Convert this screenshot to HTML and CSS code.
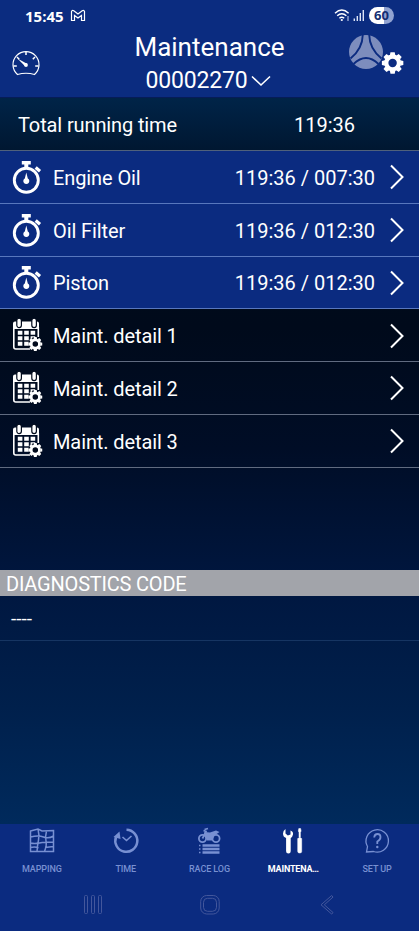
FILE: index.html
```html
<!DOCTYPE html>
<html lang="en">
<head>
<meta charset="utf-8">
<title>Maintenance</title>
<link rel="stylesheet" href="styles.css">
</head>
<body>
<svg class="defs" width="0" height="0">
  <defs>
    <symbol id="gear" viewBox="-12 -12 24 24">
      <circle r="6.6" fill="none" stroke="currentColor" stroke-width="4.4"/>
      <g fill="currentColor">
        <path id="tooth" d="M-2.8-8L-2.2-11.200H2.200L2.800-8Z"/>
        <use href="#tooth" transform="rotate(45)"/><use href="#tooth" transform="rotate(90)"/>
        <use href="#tooth" transform="rotate(135)"/><use href="#tooth" transform="rotate(180)"/>
        <use href="#tooth" transform="rotate(225)"/><use href="#tooth" transform="rotate(270)"/>
        <use href="#tooth" transform="rotate(315)"/>
      </g>
    </symbol>
    <symbol id="watch" viewBox="0 0 30 34">
      <circle cx="14.300" cy="20.3" r="12" fill="none" stroke="#fff" stroke-width="2.9"/>
      <path d="M9.800 1h9v3.500h-2.500v4h-4v-4H9.800z" fill="#fff"/>
      <path d="M23.700 7.500l4.300 3.800" stroke="#fff" stroke-width="3.200"/>
      <path d="M14.300 12.500l1.500 6a3 3 0 1 1-3 0z" fill="#fff"/>
    </symbol>
    <symbol id="calendar" viewBox="0 0 31 34">
      <path d="M1 5.500a2 2 0 0 1 2-2h22a2 2 0 0 1 2 2V11H1z" fill="#fff"/>
      <path d="M1.800 9v20a2 2 0 0 0 2 2H18M26.300 9v10" fill="none" stroke="#fff" stroke-width="1.600"/>
      <g fill="#fff" stroke="#020b1c" stroke-width="1.200"><rect x="4.800" y=".2" width="4.600" height="9.400" rx="2.300"/><rect x="19.800" y=".2" width="4.600" height="9.400" rx="2.300"/></g>
      <path d="M5.800 14.800h17.500M5.800 20.300h17.500M5.800 25.800h12" stroke="#fff" stroke-width="4" stroke-dasharray="4.600 1.800"/>
      <circle cx="23.300" cy="26" r="7" fill="#020b1c"/>
      <use href="#gear" x="15.800" y="18.500" width="15" height="15" color="#fff"/>
    </symbol>
    <symbol id="chevron" viewBox="0 0 16 26"><path d="M2 1.500L13.500 13 2 24.500" fill="none" stroke="#fff" stroke-width="2"/></symbol>
  </defs>
</svg>
<div class="app">
  <header class="header">
    <div class="status">
      <span class="clock">15:45</span>
      <svg class="mail" width="16" height="13" viewBox="0 0 16 13"><path d="M1.500 11.500v-9Q2 .8 3.800 1.700L8 5l4.200-3.300Q14 .8 14.500 2.500v9h-3V6.400L8 9 4.500 6.400v5.100z" fill="none" stroke="#fff" stroke-width="1.200"/></svg>
      <svg class="signal" width="32" height="15" viewBox="0 0 32 15">
        <g fill="none" stroke="#fff" stroke-width="1.400"><path d="M1 5.200Q7.800-1.300 14.600 5.200M3.200 7.800q4.600-4.200 9.200 0M5.400 10.200q2.400-2 4.800 0"/></g>
        <circle cx="7.800" cy="12" r="1.100" fill="#fff"/><path d="M14 8v5" stroke="#aebce0" stroke-width="1.200"/>
        <path d="M20.300 10.500V13M23.300 8v5M26.300 5v8M29.300 2v11" stroke="#dce4f7" stroke-width="1.400"/>
      </svg>
      <span class="battery">60</span>
    </div>
    <div class="titlebar">
      <svg class="gauge" width="28" height="28" viewBox="0 0 28 28" fill="none" stroke="#fff">
        <path d="M5.500 24.500A13 13 0 1 1 22.500 24.500Q14 22 5.500 24.500Z" stroke-width="1.200"/>
        <path d="M14 1.500V5M1.500 16h3.300M23.200 16h3.300M5 7l2.200 2.200M23 7l-2.200 2.200" stroke-width="1.500"/>
        <path d="M5.500 8.500l7.300 7.500 2.200-2.200z" fill="#fff" stroke="none"/><circle cx="14" cy="15" r="1.900" fill="#fff" stroke="none"/>
      </svg>
      <div class="heading">
        <h1>Maintenance</h1>
        <div class="vehicle"><span>00002270</span><svg width="20" height="12" viewBox="0 0 20 12"><path d="M1 1.500l9 8.500 9-8.500" fill="none" stroke="#fff" stroke-width="1.600"/></svg></div>
      </div>
      <svg class="tools" width="58" height="42" viewBox="0 0 58 42">
        <circle cx="18" cy="18" r="17" fill="#7d8dbd"/>
        <path d="M14.800.8Q14.500 15 2.500 24.500M21.200.8Q21.500 15 33.500 24.500M5.500 30Q18 18 30.500 30" fill="none" stroke="#0b2b80" stroke-width="1.900"/>
        <circle cx="44.600" cy="28.500" r="11" fill="#0b2b80"/>
        <use href="#gear" x="33.100" y="17.500" width="23" height="23" color="#fff"/>
      </svg>
    </div>
  </header>

  <main class="content">
    <div class="total"><span class="total-label">Total running time</span><span>119:36</span></div>
    <div class="row blue"><svg class="icon" viewBox="0 0 30 34"><use href="#watch"/></svg><span class="label">Engine Oil</span><span class="value">119:36 / 007:30</span><svg class="chev"><use href="#chevron"/></svg></div>
    <div class="row blue"><svg class="icon" viewBox="0 0 30 34"><use href="#watch"/></svg><span class="label">Oil Filter</span><span class="value">119:36 / 012:30</span><svg class="chev"><use href="#chevron"/></svg></div>
    <div class="row blue"><svg class="icon" viewBox="0 0 30 34"><use href="#watch"/></svg><span class="label">Piston</span><span class="value">119:36 / 012:30</span><svg class="chev"><use href="#chevron"/></svg></div>
    <div class="row"><svg class="icon" viewBox="0 0 31 34"><use href="#calendar"/></svg><span class="label">Maint. detail 1</span><svg class="chev"><use href="#chevron"/></svg></div>
    <div class="row"><svg class="icon" viewBox="0 0 31 34"><use href="#calendar"/></svg><span class="label">Maint. detail 2</span><svg class="chev"><use href="#chevron"/></svg></div>
    <div class="row"><svg class="icon" viewBox="0 0 31 34"><use href="#calendar"/></svg><span class="label">Maint. detail 3</span><svg class="chev"><use href="#chevron"/></svg></div>
    <h2 class="section">DIAGNOSTICS CODE</h2>
    <div class="code">----</div>
  </main>

  <nav class="tabs">
    <div class="tab"><svg width="28" height="28" viewBox="0 0 28 28" fill="none" stroke="currentColor" stroke-width="1.500"><path d="M2.500 4L10 2l4 2 11.500-.5v21H2.500zM10 2q1.500 6 .5 11t-1.500 11.500M18.500 4q-1.500 6-.5 10t-1.500 10.500M2.500 10q8-2 13 0t10-1M2.500 16q4 1 9 0t14-1M2.500 20.500q5-1 8 .5M17 20.500l8.500-1"/></svg><span>MAPPING</span></div>
    <div class="tab"><svg width="28" height="28" viewBox="0 0 28 28" fill="none" stroke="currentColor"><path d="M14.500 2.800A11 11 0 1 1 4 10" stroke-width="2.500"/><path d="M1.500 10L7.500 4.500l1 7.500z" fill="currentColor" stroke="none"/><path d="M10.500 10l4 3.500 5-4.500" stroke-width="1.600"/></svg><span>TIME</span></div>
    <div class="tab"><svg width="28" height="28" viewBox="0 0 28 28" fill="none" stroke="currentColor"><circle cx="7.500" cy="11.500" r="3.600" stroke-width="1.800"/><circle cx="21" cy="11.500" r="3.600" stroke-width="1.800"/><path d="M7.500 11.500L11 4.500 8.500 3.500M9.500 2.500l3.500-1" stroke-width="1.700"/><path d="M9.500 5l5.500.5 6-2 3.500 1.500-5 3.500-2 5h-5.500L9 8z" fill="currentColor" stroke="none"/><path d="M7.500 18.500h17M7.500 22h17M7.500 25.500h17" stroke-width="2.400"/><path d="M4 18.500h1.500M4 22h1.500M4 25.500h1.500" stroke-width="1.600"/></svg><span>RACE LOG</span></div>
    <div class="tab active"><svg width="28" height="28" viewBox="0 0 28 28"><path d="M6.500 2v4.500l2.300 2L11.500 7.500V3.500q3 1 2.500 4-.5 2.500-2.300 3.500v13.200a2.300 2.300 0 0 1-4.600 0V11Q4 10 4 6.500 4 3.500 6.500 2z" fill="currentColor"/><path d="M19.800 1.500h1.800l.5 2.500-.7 1.500v5h-1.400v-5L19.300 4zM18.700 11.500q2-1.500 4 0v13q0 1.500-2 1.500t-2-1.500z" fill="currentColor" stroke="currentColor" stroke-width=".5"/></svg><span>MAINTENA…</span></div>
    <div class="tab"><svg width="28" height="28" viewBox="0 0 28 28" fill="none" stroke="currentColor"><path d="M3.500 25l1-5.500A11.200 11.200 0 1 1 10.500 24.500z" stroke-width="1.300"/><path d="M11.200 10.500q.3-3.500 3.300-3.500t3 3-3.200 4.500v2.500" stroke-width="1.800"/><circle cx="14.300" cy="20" r="1.200" fill="currentColor" stroke="none"/></svg><span>SET UP</span></div>
  </nav>
  <div class="system">
    <svg width="20" height="22" viewBox="0 0 20 22" fill="none" stroke="#43579c" stroke-width="1"><rect x="1.500" y="1.500" width="3" height="18" rx="1"/><rect x="8.500" y="1.500" width="3" height="18" rx="1"/><rect x="15.500" y="1.500" width="3" height="18" rx="1"/></svg>
    <svg width="20" height="22" viewBox="0 0 20 22" fill="none" stroke="#43579c" stroke-width="1"><rect x=".7" y="1.500" width="18.500" height="18.500" rx="6"/><rect x="3.500" y="4.300" width="13" height="13" rx="4"/></svg>
    <svg width="20" height="22" viewBox="0 0 20 22" fill="none" stroke="#43579c" stroke-width="1"><path d="M14.700 1.500L4 10.800l10.700 9.300 1.300-1.600-8.700-7.700L16 3.100z"/></svg>
  </div>
</div>
</body>
</html>
```

FILE: styles.css
```css
* { box-sizing: border-box; }
body { margin: 0; background: #0b2b80; }
.defs { display: block; }
.app { width: 419px; height: 931px; display: flex; flex-direction: column; font-family: Roboto, sans-serif; color: #fff; overflow: hidden; }
.header { height: 98px; background: #0b2c80; border-bottom: 1px solid #061c58; }
.status { height: 31px; display: flex; align-items: center; padding: 0 25px; }
.clock { font: 700 15px "Open Sans", sans-serif; width: 39px; }
.mail { margin-left: 6px; }
.signal { margin-left: auto; margin-right: 3px; }
.battery { width: 25px; height: 17px; border-radius: 9px; background: linear-gradient(90deg, #fff 60%, #91a3d1 60%); color: #142e72; font: 700 13px/17px "Open Sans", sans-serif; text-align: center; }
.titlebar { display: grid; grid-template-columns: 100px 1fr 100px; height: 66px; }
.gauge { margin: 19px 0 0 12px; }
.heading { text-align: center; }
h1 { margin: 0; font-size: 26px; font-weight: 400; line-height: 32px; white-space: nowrap; }
.vehicle { display: flex; justify-content: center; align-items: center; gap: 3px; font-size: 23px; line-height: 35px; padding-right: 3px; letter-spacing: -.15px; }
.tools { margin: 3px 0 0 29px; }
.content { height: 726px; background: linear-gradient(#002448 0, #001731 52px, #000b1b 180px, #000a1b 230px, #000d26 350px, #001740 490px, #00204c 610px, #002a5c 725px); }
.total { height: 53px; display: flex; align-items: center; padding: 2px 64px 0 18px; justify-content: space-between; font-size: 20px; border-bottom: 1px solid #50617b; }
.total-label { letter-spacing: -.12px; }
.row { height: 52.75px; display: flex; align-items: center; padding: 2px 14px 0 12px; border-bottom: 1px solid #606b80; font-size: 20px; }
.blue { background: #0b2b80; border-bottom-color: #5877bd; }
.icon { width: 31px; height: 34px; margin: -2px 10px 0 0; flex: none; }
.blue .icon { width: 30px; margin-right: 11px; }
.label { flex: 1; letter-spacing: -.1px; }
.chev { width: 16px; height: 26px; margin: -1px 0 0 14px; flex: none; }
.section { margin: 102px 0 0; height: 26px; padding-left: 6px; background: #a2a4aa; font-size: 20px; font-weight: 400; line-height: 28px; letter-spacing: -.2px; }
.code { height: 45px; padding-left: 11px; border-bottom: 1px solid #163562; font-size: 19px; line-height: 45px; }
.tabs { height: 59px; display: grid; grid-template-columns: repeat(5, 1fr); background: #0b2b80; }
.tab { display: flex; flex-direction: column; align-items: center; padding-top: 3px; color: #7890d2; font-size: 9px; font-weight: 500; line-height: 12px; gap: 8px; letter-spacing: -.1px; }
.tab.active { color: #fff; font-weight: 700; letter-spacing: -.2px; }
.system { height: 48px; background: #0b2b80; display: flex; justify-content: center; gap: 97px; padding-top: 11px; }
```
